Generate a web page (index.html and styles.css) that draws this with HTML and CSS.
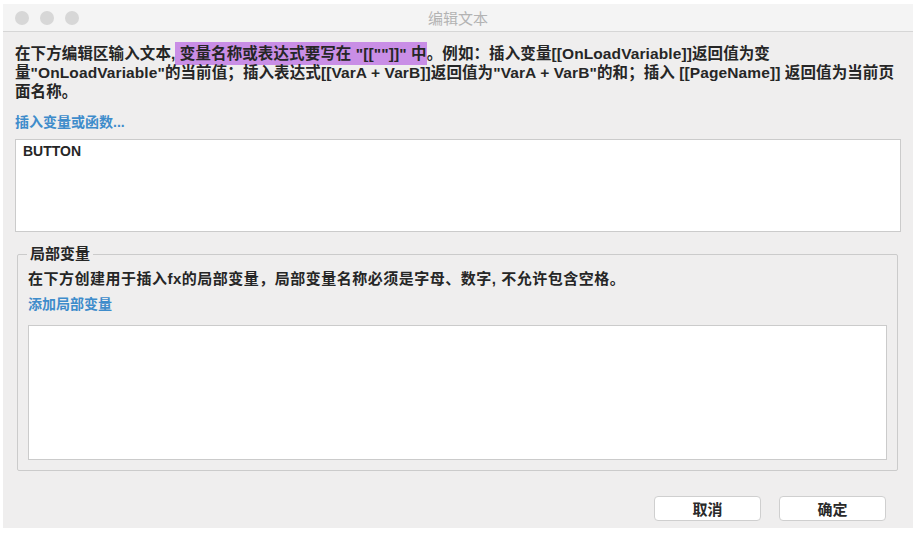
FILE: index.html
```html
<!DOCTYPE html>
<html lang="zh-CN">
<head>
    <meta charset="UTF-8">
    <title>编辑文本</title>
    <link rel="stylesheet" href="styles.css">
</head>
<body>

    <div class="window">
        <div class="titlebar">
            <div class="lights">
                <span class="light"></span>
                <span class="light"></span>
                <span class="light"></span>
            </div>
            <div class="title">编辑文本</div>
        </div>

        <div class="content">
            <p class="intro">在下方编辑区输入文本,<span class="mark"> 变量名称或表达式要写在 "[[""]]" 中</span>。例如：插入变量[[OnLoadVariable]]返回值为变<br>量"OnLoadVariable"的当前值；插入表达式[[VarA + VarB]]返回值为"VarA + VarB"的和；插入 [[PageName]] 返回值为当前页<br>面名称。</p>

            <a class="link insert-link" href="#">插入变量或函数...</a>

            <div class="editor">BUTTON</div>

            <fieldset class="locals">
                <legend>局部变量</legend>
                <p class="locals-note">在下方创建用于插入fx的局部变量，局部变量名称必须是字母、数字, 不允许包含空格。</p>
                <a class="link add-link" href="#">添加局部变量</a>
                <div class="locals-list"></div>
            </fieldset>

            <div class="btn-row">
                <button type="button">取消</button>
                <button type="button">确定</button>
            </div>
        </div>
    </div>

</body>
</html>
```

FILE: styles.css
```css
body {
    margin: 0;
    padding: 0;
    background: #ffffff;
    font-family: "Liberation Sans", "Noto Sans CJK SC", sans-serif;
    color: #262626;
}

.window {
    margin: 4px 4px 0 3px;
    width: 910px;
    height: 524px;
    background-color: #efeeee;
    display: flex;
    flex-direction: column;
}

.titlebar {
    height: 27px;
    background-color: #f4f4f4;
    border-bottom: 1px solid #d6d6d6;
    display: flex;
    align-items: center;
    position: relative;
}

.lights {
    display: flex;
    gap: 11px;
    padding-left: 12px;
}

.light {
    width: 14px;
    height: 14px;
    border-radius: 50%;
    background-color: #d7d7d7;
}

.title {
    position: absolute;
    left: 0;
    right: 0;
    text-align: center;
    font-size: 15px;
    color: #b3b3b3;
}

.content {
    padding: 0 12px 0 12px;
    display: flex;
    flex-direction: column;
}

.intro {
    margin: 12px 0 0 0;
    font-size: 15.5px;
    line-height: 19px;
    font-weight: 600;
    letter-spacing: 0.1px;
}

.mark {
    background-color: #c98ee6;
    padding: 3px 0;
}

.link {
    color: #3e8ccb;
    text-decoration: none;
    font-size: 14px;
    font-weight: 600;
}

.insert-link {
    margin-top: 12px;
    line-height: 18px;
}

.editor {
    margin-top: 8px;
    height: 85px;
    background-color: #ffffff;
    border: 1px solid #cbcbcb;
    padding: 3px 7px;
    font-size: 14px;
    font-weight: bold;
    line-height: 16px;
}

.locals {
    margin: 13px 3px 0 2px;
    padding: 0 10px 10px 10px;
    border: 1px solid #cbcbcb;
    border-radius: 2px;
}

.locals legend {
    padding: 0 3px;
    margin-left: -1px;
    font-size: 15px;
    font-weight: 600;
    line-height: 18px;
}

.locals-note {
    margin: 6px 0 0 0;
    font-size: 15px;
    font-weight: 600;
    line-height: 20px;
    letter-spacing: 0.5px;
}

.add-link {
    display: block;
    margin-top: 5px;
    line-height: 20px;
}

.locals-list {
    margin-top: 11px;
    margin-right: 0;
    height: 133px;
    background-color: #ffffff;
    border: 1px solid #cbcbcb;
}

.btn-row {
    display: flex;
    justify-content: flex-end;
    gap: 18px;
    margin-top: 25px;
    padding-right: 15px;
}

button {
    width: 107px;
    height: 25px;
    background-color: #ffffff;
    border: 1px solid #cfcfcf;
    border-radius: 4px;
    font-family: "Liberation Sans", "Noto Sans CJK SC", sans-serif;
    font-size: 15px;
    font-weight: 600;
    color: #2a2a2a;
    padding: 0;
}
```
